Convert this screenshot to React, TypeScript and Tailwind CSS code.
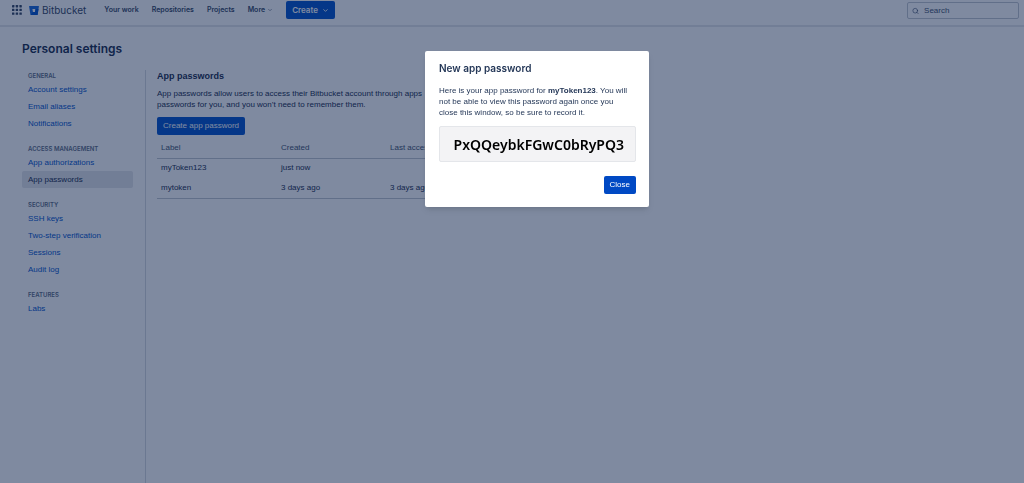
import { Search, ChevronDown } from 'lucide-react'

type NavGroup = { title: string; items: string[] }

const NAV_LINKS = ['Your work', 'Repositories', 'Projects']

const GROUPS: NavGroup[] = [
  { title: 'General', items: ['Account settings', 'Email aliases', 'Notifications'] },
  { title: 'Access management', items: ['App authorizations', 'App passwords'] },
  { title: 'Security', items: ['SSH keys', 'Two-step verification', 'Sessions', 'Audit log'] },
  { title: 'Features', items: ['Labs'] },
]

const PASSWORDS = [
  { label: 'myToken123', created: 'just now', accessed: '' },
  { label: 'mytoken', created: '3 days ago', accessed: '3 days ago' },
]

function AppSwitcherIcon() {
  return (
    <svg width="10" height="10" viewBox="0 0 10 10" fill="currentColor" aria-hidden="true">
      {[0, 3.7, 7.4].map(y => [0, 3.7, 7.4].map(x => <rect key={`${x}-${y}`} x={x} y={y} width="2.400" height="2.400" rx="0.4" />))}
    </svg>
  )
}

function BitbucketLogo() {
  return (
    <svg width="10" height="9" viewBox="0 0 32 29" aria-hidden="true">
      <path d="M1.100 0a1 1 0 0 0-1 1.200l4.300 26.300a1.400 1.400 0 0 0 1.400 1.200h20.800a1 1 0 0 0 1-.9L31.900 1.200a1 1 0 0 0-1-1.200zM19.300 19h-6.600l-1.800-9.300h10z" fill="#1868db" />
      <path d="M30.600 9.700h-9.700L19.300 19h-6.600l-7.700 9.300c.3.300.6.400 1 .400h20.600a1 1 0 0 0 1-.9z" fill="#0052cc" />
    </svg>
  )
}

function TopNav() {
  return (
    <header className="flex h-[27px] items-start justify-between border-b-2 border-[#e4e6ea] pr-[5px] pl-3 text-[#344563]">
      <div className="flex h-5 items-center">
        <button aria-label="Switch to"><AppSwitcherIcon /></button>
        <a href="#" className="ml-[7px] flex items-center gap-[3px] font-['Inter',sans-serif] text-[10px]">
          <BitbucketLogo />
          Bitbucket
        </a>
        <nav className="ml-[18px] flex items-center gap-[13px] font-['Inter',sans-serif] text-[7px] font-semibold">
          {NAV_LINKS.map(link => <a key={link} href="#">{link}</a>)}
          <button className="flex items-center gap-[2px] font-semibold">
            More <ChevronDown size={6} />
          </button>
          <button className="flex h-[18px] items-center gap-1 rounded-[2px] bg-[#0052cc] px-[6px] text-[8px] font-semibold text-white">
            Create <ChevronDown size={7} strokeWidth={3} />
          </button>
        </nav>
      </div>
      <label className="mt-[2px] flex h-[17px] w-28 items-center gap-[5px] rounded-[2px] border border-[#c1c7d0] px-1">
        <Search size={8} />
        <input type="search" placeholder="Search" aria-label="Search" className="w-full min-w-0 bg-transparent text-[8px] outline-none placeholder:text-[#42526e]" />
      </label>
    </header>
  )
}

function Sidebar() {
  return (
    <nav className="flex w-[124px] shrink-0 flex-col gap-[11px] border-r border-[#d5d9e0] pr-3">
      {GROUPS.map(group => (
        <section key={group.title}>
          <h2 className="px-[6px] font-['Inter',sans-serif] text-[6px] leading-[11px] font-semibold text-[#5e6c84] uppercase">{group.title}</h2>
          <ul>
            {group.items.map(item => (
              <li key={item}>
                <a
                  href="#"
                  className={`block rounded-[2px] px-[6px] text-[8px] leading-[17px] ${item === 'App passwords' ? 'bg-[#e4e6ea] text-[#172b4d]' : 'text-[#0052cc]'}`}
                >
                  {item}
                </a>
              </li>
            ))}
          </ul>
        </section>
      ))}
    </nav>
  )
}

function PasswordTable() {
  return (
    <table className="mt-[3px] w-full table-fixed border-b border-[#c1c7d0] text-left text-[8px]">
      <thead>
        <tr className="h-5 border-b border-[#c1c7d0] text-[#42526e]">
          <th className="w-[120px] px-1 font-normal">Label</th>
          <th className="w-[109px] px-1 font-normal">Created</th>
          <th className="px-1 font-normal">Last accessed</th>
        </tr>
      </thead>
      <tbody>
        {PASSWORDS.map(row => (
          <tr key={row.label} className="h-5">
            <td className="px-1">{row.label}</td>
            <td className="px-1">{row.created}</td>
            <td className="px-1">{row.accessed}</td>
          </tr>
        ))}
      </tbody>
    </table>
  )
}

function NewPasswordDialog() {
  return (
    <div className="fixed inset-0 flex items-start justify-center bg-[#0a1f48]/52 pt-[51px] pl-[50px]">
      <div role="dialog" aria-modal="true" aria-labelledby="dialog-title" className="w-56 rounded-[2px] bg-white pt-[9px] pr-[13px] pb-[13px] pl-[14px] shadow-md">
        <h2 id="dialog-title" className="font-['Inter',sans-serif] text-[10px] leading-4 font-semibold text-[#253858]">New app password</h2>
        <p className="mt-[9px] pr-1 text-[8px] leading-[11px] text-[#253858]">
          Here is your app password for <strong>myToken123</strong>. You will not be able to view this password again once you close this window, so be sure to record it.
        </p>
        <div className="mt-2 flex h-9 items-center justify-end rounded-[2px] border border-[#e4e6ea] bg-[#f3f3f5] px-[11px] font-['Noto_Sans',sans-serif] text-[14px] font-semibold text-black">
          PxQQeybkFGwC0bRyPQ3
        </div>
        <div className="mt-[14px] flex justify-end">
          <button className="h-[18px] rounded-[2px] bg-[#0049c4] px-[6px] text-[8px] text-white">Close</button>
        </div>
      </div>
    </div>
  )
}

export default function App() {
  return (
    <div className="flex min-h-screen flex-col bg-white font-['Liberation_Sans',sans-serif] text-[#172b4d]">
      <TopNav />
      <h1 className="mt-[14px] ml-[22px] font-['Inter',sans-serif] text-[12px] leading-4 font-semibold">Personal settings</h1>
      <div className="mt-[13px] flex flex-1 pl-[22px]">
        <Sidebar />
        <main className="w-full max-w-[480px] pl-[11px]">
          <h2 className="text-[9px] leading-3 font-bold">App passwords</h2>
          <p className="mt-[6px] text-[8px] leading-[11px]">
            App passwords allow users to access their Bitbucket account through apps
            <br />
            passwords for you, and you won’t need to remember them.
          </p>
          <button className="mt-[7px] h-[18px] rounded-[2px] bg-[#0052cc] px-[6px] text-[8px] text-white">Create app password</button>
          <PasswordTable />
        </main>
      </div>
      <NewPasswordDialog />
    </div>
  )
}
